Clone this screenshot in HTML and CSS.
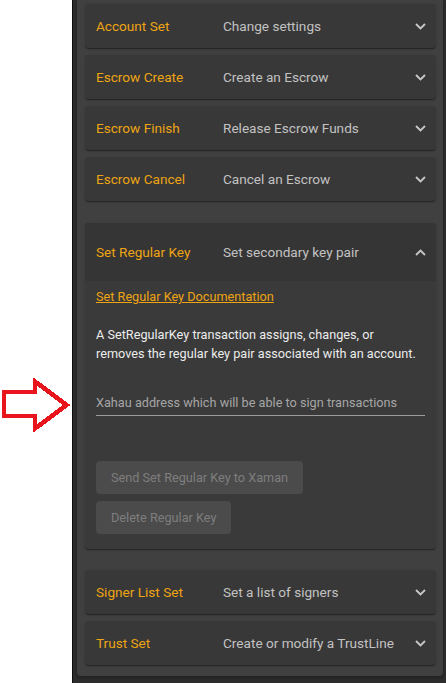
FILE: index.html
```html
<!DOCTYPE html>
<html>
<head>
<meta charset="utf-8">
<link rel="stylesheet" href="styles.css">
</head>
<body>
<div class="gutter">
  <svg class="pointer" width="72" height="60" viewBox="0 375 72 60">
    <polygon points="4,392 35,392 35,381.5 66.5,405 35,428.5 35,416 4,416" fill="#ffffff" stroke="#e8161c" stroke-width="4.6" stroke-linejoin="miter" shape-rendering="crispEdges"/>
  </svg>
</div>
<main class="pane">
  <section class="card">
    <div class="acc">
      <div class="sum"><span class="title">Account Set</span><span class="desc">Change settings</span><svg class="chev" viewBox="0 0 11 7"><path d="M1 1 5.5 5.5 10 1"/></svg></div>
    </div>
    <div class="acc">
      <div class="sum"><span class="title">Escrow Create</span><span class="desc">Create an Escrow</span><svg class="chev" viewBox="0 0 11 7"><path d="M1 1 5.5 5.5 10 1"/></svg></div>
    </div>
    <div class="acc">
      <div class="sum"><span class="title">Escrow Finish</span><span class="desc">Release Escrow Funds</span><svg class="chev" viewBox="0 0 11 7"><path d="M1 1 5.5 5.5 10 1"/></svg></div>
    </div>
    <div class="acc">
      <div class="sum"><span class="title">Escrow Cancel</span><span class="desc">Cancel an Escrow</span><svg class="chev" viewBox="0 0 11 7"><path d="M1 1 5.5 5.5 10 1"/></svg></div>
    </div>
    <div class="acc open">
      <div class="sum big"><span class="title">Set Regular Key</span><span class="desc">Set secondary key pair</span><svg class="chev" viewBox="0 0 11 7"><path d="M1 6 5.5 1.5 10 6"/></svg></div>
      <div class="details">
        <a class="doc" href="#">Set Regular Key Documentation</a>
        <p class="text">A SetRegularKey transaction assigns, changes, or removes the regular key pair associated with an account.</p>
        <div class="field"><input class="inp" type="text" placeholder="Xahau address which will be able to sign transactions"></div>
        <div class="actions">
          <button class="btn" disabled>Send Set Regular Key to Xaman</button>
          <button class="btn" disabled>Delete Regular Key</button>
        </div>
      </div>
    </div>
    <div class="acc">
      <div class="sum"><span class="title">Signer List Set</span><span class="desc">Set a list of signers</span><svg class="chev" viewBox="0 0 11 7"><path d="M1 1 5.5 5.5 10 1"/></svg></div>
    </div>
    <div class="acc">
      <div class="sum"><span class="title">Trust Set</span><span class="desc">Create or modify a TrustLine</span><svg class="chev" viewBox="0 0 11 7"><path d="M1 1 5.5 5.5 10 1"/></svg></div>
    </div>
  </section>
</main>
</body>
</html>
```
FILE: styles.css
```css
* { box-sizing: border-box; }
html, body { height: 100%; }
body {
  margin: 0;
  display: flex;
  background: #ffffff;
  font-family: Roboto, "Liberation Sans", sans-serif;
  overflow: hidden;
}
.gutter {
  width: 72px;
  flex: none;
  background: #ffffff;
  position: relative;
}
.pointer {
  position: absolute;
  left: 0;
  top: 375px;
}
.pane {
  flex: 1;
  background: #2d2d2d;
  border-left: 1px solid #0e0e0e;
  padding: 0 3px 0 4px;
}
.card {
  background: #404040;
  border-radius: 0 0 4px 4px;
  padding: 4px 7px 11px 8px;
  display: flex;
  flex-direction: column;
  gap: 7px;
  box-shadow: 0 2px 4px rgba(0,0,0,0.3);
}
.acc {
  background: #383838;
  border-radius: 4px;
  box-shadow: 0 2px 1px -1px rgba(0,0,0,0.25), 0 1px 1px 0 rgba(0,0,0,0.16), 0 1px 3px 0 rgba(0,0,0,0.14);
}
.acc.open {
  margin: 15px 0 14px;
  background: #3a3a3a;
}
.sum {
  height: 44px;
  display: flex;
  align-items: center;
  padding: 0 10px 0 11px;
  font-size: 13.6px;
}
.sum.big {
  height: 58px;
  background: #353535;
  border-radius: 4px 4px 0 0;
}
.title {
  width: 127px;
  flex: none;
  color: #eea413;
}
.desc {
  flex: 1;
  color: #c2c2c2;
}
.chev {
  width: 11px;
  height: 7px;
  margin-top: 1px;
  fill: none;
  stroke: #c8c8c8;
  stroke-width: 1.8;
}
.details {
  padding: 8px 11px 15px;
  display: flex;
  flex-direction: column;
}
.doc {
  color: #eea413;
  font-size: 12.7px;
  line-height: 16px;
  text-decoration: underline;
  align-self: flex-start;
}
.text {
  margin: 20px 0 0;
  color: #ececec;
  font-size: 12.7px;
  line-height: 19px;
}
.field {
  margin-top: 29px;
  border-bottom: 1px solid #9c9c9c;
  padding-bottom: 2px;
}
.inp {
  width: 100%;
  border: 0;
  outline: 0;
  background: transparent;
  padding: 0;
  font-family: Roboto, "Liberation Sans", sans-serif;
  font-size: 12.7px;
  line-height: 20px;
  height: 20px;
  color: #e0e0e0;
}
.inp::placeholder { color: #a6a6a6; opacity: 1; }
.actions {
  margin-top: 45px;
  display: flex;
  flex-direction: column;
  align-items: flex-start;
  gap: 7px;
}
.btn {
  height: 33px;
  padding: 0 15px;
  border: 0;
  border-radius: 4px;
  background: #4b4b4b;
  color: #7e7e7e;
  font-family: Roboto, "Liberation Sans", sans-serif;
  font-size: 12.7px;
}
```
